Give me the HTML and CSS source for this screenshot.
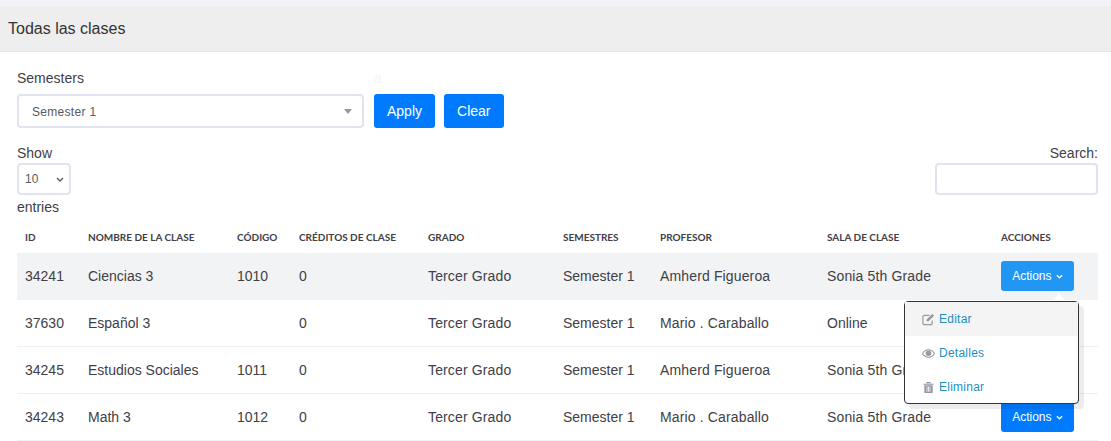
FILE: index.html
```html
<!DOCTYPE html>
<html lang="es">
<head>
    <meta charset="UTF-8">
    <meta name="viewport" content="width=device-width, initial-scale=1.0">
    <title>Todas las clases</title>
    <link rel="stylesheet" href="styles.css">
</head>
<body>
    <header class="title-bar">
        <h1>Todas las clases</h1>
    </header>

    <div class="content">
        <div class="filters">
            <div class="field">
                <label class="field-label">Semesters</label>
                <div class="fake-select">
                    <span>Semester 1</span>
                    <i class="caret"></i>
                </div>
            </div>
            <div class="filter-actions">
                <span class="ghost-label">a</span>
                <div class="filter-buttons">
                    <button class="btn">Apply</button>
                    <button class="btn">Clear</button>
                </div>
            </div>
        </div>

        <div class="table-tools">
            <div class="length">
                <div>Show</div>
                <div class="length-box">
                    <select class="length-select">
                        <option>10</option>
                    </select>
                    <svg class="length-chev" viewBox="0 0 8 5"><path d="M1 1l3 3 3-3" fill="none" stroke="currentColor" stroke-width="1.4"/></svg>
                </div>
                <div>entries</div>
            </div>
            <div class="search">
                <div>Search:</div>
                <input type="text" class="search-input">
            </div>
        </div>

        <table class="classes">
            <colgroup>
                <col class="c-id"><col class="c-name"><col class="c-code"><col class="c-credits"><col class="c-grade"><col class="c-sem"><col class="c-prof"><col class="c-room"><col class="c-act">
            </colgroup>
            <thead>
                <tr>
                    <th>ID</th>
                    <th>NOMBRE DE LA CLASE</th>
                    <th>CÓDIGO</th>
                    <th>CRÉDITOS DE CLASE</th>
                    <th>GRADO</th>
                    <th>SEMESTRES</th>
                    <th>PROFESOR</th>
                    <th>SALA DE CLASE</th>
                    <th>ACCIONES</th>
                </tr>
            </thead>
            <tbody>
                <tr class="hovered">
                    <td>34241</td>
                    <td>Ciencias 3</td>
                    <td>1010</td>
                    <td>0</td>
                    <td class="wide">Tercer Grado</td>
                    <td>Semester 1</td>
                    <td class="wide">Amherd Figueroa</td>
                    <td class="wide">Sonia 5th Grade</td>
                    <td class="actions-cell">
                        <button class="btn-actions btn-open">Actions <svg class="chev" viewBox="0 0 8 5"><path d="M1 1l3 3 3-3" fill="none" stroke="currentColor" stroke-width="1.5"/></svg></button>
                        <div class="menu">
                            <a class="menu-item active" href="#">
                                <svg class="menu-icon" viewBox="0 0 14 14"><path d="M11 8v3a1.5 1.5 0 0 1-1.5 1.5h-7A1.500 1.500 0 0 1 1 11V4a1.500 1.500 0 0 1 1.500-1.500H8" fill="none" stroke="currentColor" stroke-width="1.3"/><path d="M5 7l6-6 2 2-6 6H5z" fill="currentColor"/></svg>Editar
                            </a>
                            <a class="menu-item" href="#">
                                <svg class="menu-icon" viewBox="0 0 14 14"><path d="M.5 7C2 4.500 4.300 3 7 3s5 1.500 6.500 4C12 9.500 9.700 11 7 11S2 9.500.5 7z" fill="none" stroke="currentColor" stroke-width="1.1"/><circle cx="7" cy="6.800" r="3" fill="currentColor"/></svg>Detalles
                            </a>
                            <a class="menu-item" href="#">
                                <svg class="menu-icon" viewBox="0 0 14 14"><path d="M1.500 3h11v1h-11zM5 1h4l.7 1.500H4.300z" fill="currentColor"/><path d="M2.500 4.500h9V12a1 1 0 0 1-1 1h-7a1 1 0 0 1-1-1zM5 6v5.500h.8V6zm1.600 0v5.500h.8V6zm1.600 0v5.500H9V6z" fill="currentColor" fill-rule="evenodd"/></svg>Eliminar
                            </a>
                        </div>
                    </td>
                </tr>
                <tr>
                    <td>37630</td>
                    <td>Español 3</td>
                    <td></td>
                    <td>0</td>
                    <td class="wide">Tercer Grado</td>
                    <td>Semester 1</td>
                    <td class="wide">Mario . Caraballo</td>
                    <td>Online</td>
                    <td></td>
                </tr>
                <tr>
                    <td>34245</td>
                    <td>Estudios Sociales</td>
                    <td>1011</td>
                    <td>0</td>
                    <td class="wide">Tercer Grado</td>
                    <td>Semester 1</td>
                    <td class="wide">Amherd Figueroa</td>
                    <td class="wide">Sonia 5th Grade</td>
                    <td></td>
                </tr>
                <tr>
                    <td>34243</td>
                    <td>Math 3</td>
                    <td>1012</td>
                    <td>0</td>
                    <td class="wide">Tercer Grado</td>
                    <td>Semester 1</td>
                    <td class="wide">Mario . Caraballo</td>
                    <td class="wide">Sonia 5th Grade</td>
                    <td class="actions-cell">
                        <button class="btn-actions">Actions <svg class="chev" viewBox="0 0 8 5"><path d="M1 1l3 3 3-3" fill="none" stroke="currentColor" stroke-width="1.5"/></svg></button>
                    </td>
                </tr>
            </tbody>
        </table>
    </div>
</body>
</html>
```

FILE: styles.css
```css
/* Reset */
* {
    margin: 0;
    padding: 0;
    box-sizing: border-box;
}

html, body {
    height: 441px;
    overflow: hidden;
}

body {
    font-family: "Liberation Sans", Arial, sans-serif;
    font-size: 14px;
    color: #3f4047;
    background: #fff;
}

/* Title */
.title-bar {
    height: 52px;
    padding: 0 8px;
    background: #eeeeee;
    border-top: 6px solid #f2f3f8;
    border-bottom: 1px solid #e6e6e6;
    display: flex;
    align-items: center;
}

.title-bar h1 {
    font-size: 16px;
    font-weight: 400;
    color: #333;
}

.content {
    padding: 18px 13px 0 17px;
}

/* Filters */
.filters {
    display: flex;
    gap: 10px;
}

.field {
    width: 347px;
}

.field-label,
.ghost-label {
    display: block;
    height: 16px;
    line-height: 16px;
    margin-bottom: 8px;
}

.ghost-label {
    color: #eef6ff;
}

.fake-select {
    height: 34px;
    border: 2px solid #e1e4f0;
    border-radius: 4px;
    padding: 1px 10px 0 13px;
    display: flex;
    align-items: center;
    justify-content: space-between;
    font-size: 12px;
    letter-spacing: .3px;
    color: #575962;
}

.caret {
    width: 0;
    height: 0;
    border-left: 4px solid transparent;
    border-right: 4px solid transparent;
    border-top: 5px solid #999;
}

.filter-buttons {
    display: flex;
    gap: 9px;
}

.btn {
    height: 34px;
    padding: 0 13px;
    background: #007bff;
    border: none;
    border-radius: 3px;
    color: #fff;
    font-family: inherit;
    font-size: 14px;
}

/* Show / search */
.table-tools {
    display: flex;
    justify-content: space-between;
    margin-top: 17px;
    line-height: 16px;
}

.length-box {
    position: relative;
    width: 54px;
    margin: 2px 0 4px;
}

.length-select {
    display: block;
    width: 54px;
    height: 32px;
    padding-left: 6px;
    border: 2px solid #e1e4f0;
    border-radius: 4px;
    background: #fff;
    font-family: inherit;
    font-size: 12px;
    color: #575962;
    appearance: none;
}

.length-chev {
    position: absolute;
    top: 14px;
    right: 7px;
    width: 8px;
    height: 5px;
    color: #575962;
}

.search {
    text-align: right;
}

.search-input {
    display: block;
    width: 163px;
    height: 32px;
    margin-top: 2px;
    border: 2px solid #e1e4f0;
    border-radius: 4px;
}

/* Table */
.classes {
    width: 1081px;
    margin-top: 7px;
    border-collapse: separate;
    border-spacing: 0;
    table-layout: fixed;
}

.c-id { width: 63px; }
.c-name { width: 149px; }
.c-code { width: 62px; }
.c-credits { width: 129px; }
.c-grade { width: 135px; }
.c-sem { width: 97px; }
.c-prof { width: 167px; }
.c-room { width: 174px; }
.c-act { width: 105px; }

.classes th {
    height: 31px;
    padding: 0 8px 2px;
    text-align: left;
    font-family: Lato, sans-serif;
    font-size: 10px;
    font-weight: 700;
    color: #3f4047;
    white-space: nowrap;
}

.classes td {
    height: 47px;
    padding: 0 8px;
    border-bottom: 1px solid #f0f0f3;
    white-space: nowrap;
}

.classes td.wide {
    letter-spacing: .14px;
}

.classes .hovered td {
    background: #f2f3f5;
    border-bottom-color: #f2f3f5;
}

.actions-cell {
    position: relative;
}

.btn-actions {
    height: 30px;
    width: 73px;
    border: none;
    border-radius: 3px;
    background: #007bff;
    color: #fff;
    font-family: inherit;
    font-size: 12px;
}

.btn-open {
    background: #2196f3;
}

.chev {
    width: 7px;
    height: 5px;
    margin-left: 1px;
    vertical-align: 1px;
}

/* Dropdown */
.menu {
    position: absolute;
    top: 48px;
    left: -89px;
    width: 175px;
    height: 103px;
    background: #fff;
    border: 1px solid #333;
    border-radius: 4px;
    box-shadow: 5px 5px 0 rgba(0, 0, 0, .07);
    z-index: 5;
}

.menu::before {
    content: "";
    position: absolute;
    top: -8px;
    right: 12px;
    border-left: 7px solid transparent;
    border-right: 7px solid transparent;
    border-bottom: 7px solid #fff;
}

.menu-item {
    display: flex;
    align-items: center;
    height: 34px;
    padding-left: 17px;
    font-size: 12px;
    letter-spacing: .25px;
    color: #1c8fc4;
    text-decoration: none;
}

.menu-item.active {
    background: #f4f4f4;
}

.menu-icon {
    width: 13px;
    height: 13px;
    margin-right: 4px;
    color: #9699a2;
}
```
